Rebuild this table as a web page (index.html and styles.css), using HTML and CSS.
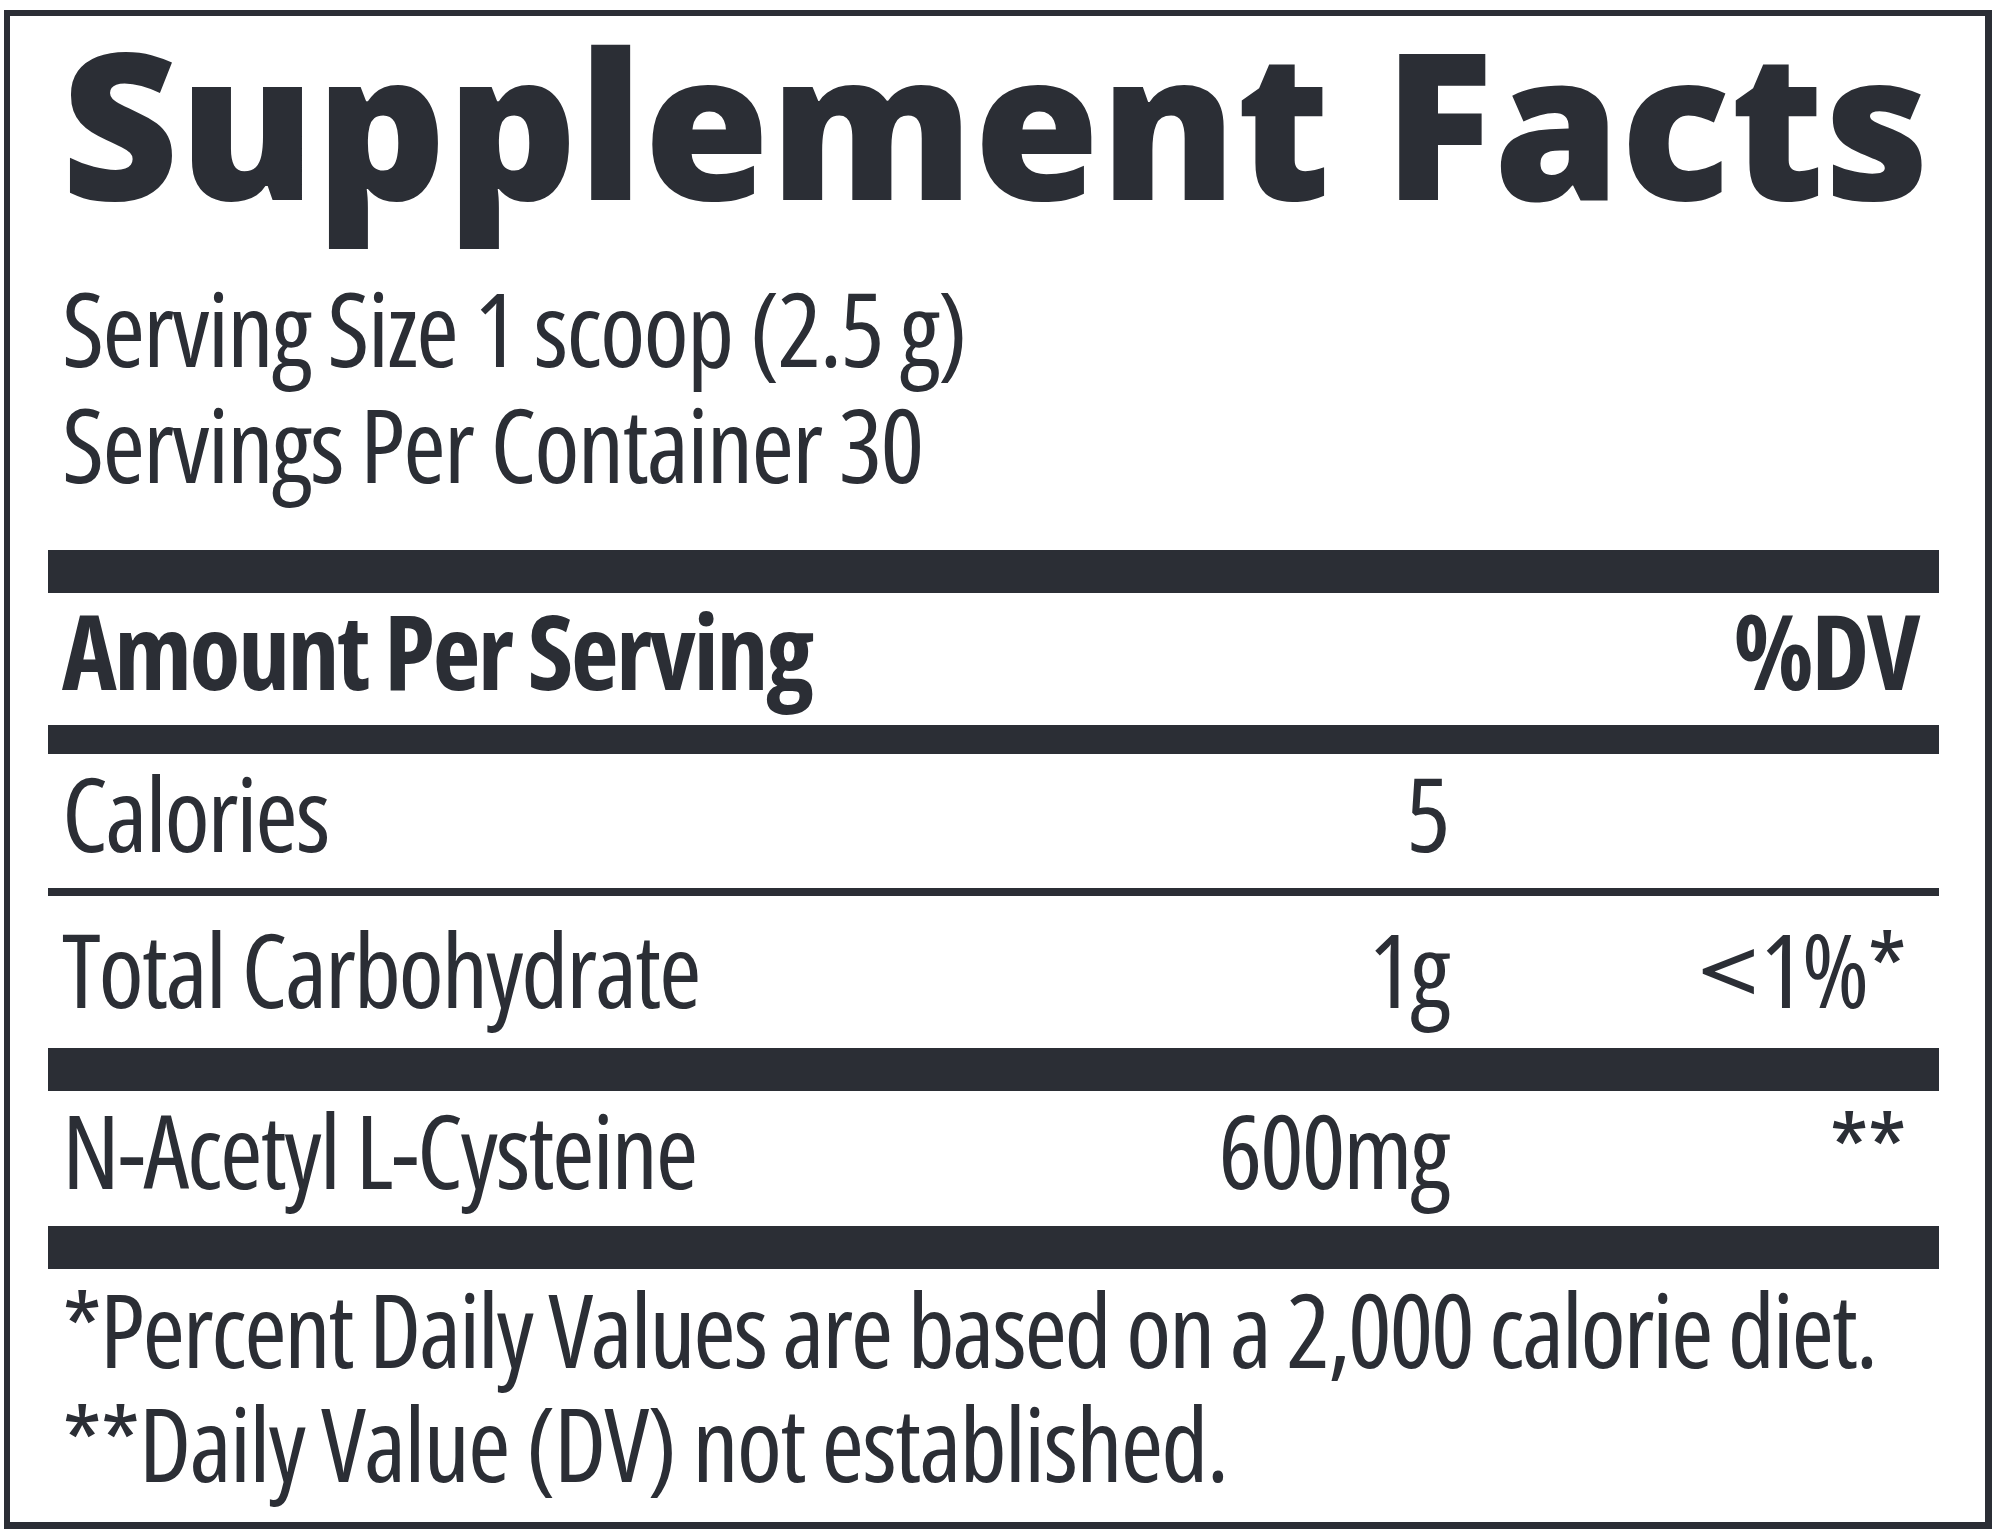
FILE: index.html
```html
<!DOCTYPE html>
<html lang="en">
<head>
    <meta charset="UTF-8">
    <meta name="viewport" content="width=device-width, initial-scale=1.0">
    <title>Supplement Facts</title>
    <link rel="stylesheet" href="styles.css">
</head>
<body>
    <div class="label">
        <h1 class="title">Supplement Facts</h1>

        <!-- Serving info -->
        <div class="serving">
            <p>Serving Size 1 scoop (2.5 g)</p>
            <p>Servings Per Container 30</p>
        </div>

        <div class="rule rule-thick"></div>
        <div class="row head">
            <span class="name">Amount Per Serving</span>
            <span class="dv">%DV</span>
        </div>
        <div class="rule rule-mid"></div>

        <div class="row row-calories">
            <span class="name">Calories</span>
            <span class="amount">5</span>
            <span class="dv"></span>
        </div>
        <div class="rule rule-thin"></div>
        <div class="row row-carb">
            <span class="name">Total Carbohydrate</span>
            <span class="amount">1g</span>
            <span class="dv"><span class="lt">&lt;</span>1%*</span>
        </div>
        <div class="rule rule-thick"></div>
        <div class="row row-nac">
            <span class="name">N-Acetyl L-Cysteine</span>
            <span class="amount">600mg</span>
            <span class="dv">**</span>
        </div>
        <div class="rule rule-thick"></div>

        <!-- Footnotes -->
        <div class="notes">
            <p class="note-long">*Percent Daily Values are based on a 2,000 calorie diet.</p>
            <p>**Daily Value (DV) not established.</p>
        </div>
    </div>
</body>
</html>
```
FILE: styles.css
```css
body {
    margin: 10px 8px 0 4px;
    background-color: #ffffff;
    color: #2b2e35;
    font-family: 'Open Sans', 'Noto Sans', sans-serif;
    font-stretch: 75%;
}
.label {
    border: 6px solid #2b2e35;
    border-right-width: 7px;
    border-bottom-width: 7px;
    padding: 0 46px 0 38px;
}
p {
    margin: 0;
}
.title {
    margin: 2px 0 0 0;
    padding-left: 13px;
    font-size: 204px;
    line-height: 206px;
    font-weight: 800;
    font-stretch: 100%;
    white-space: nowrap;
}
.serving {
    margin-top: 45px;
    padding-left: 14px;
    font-size: 103px;
    line-height: 116px;
    letter-spacing: -1.8px;
    white-space: nowrap;
}
.rule {
    background-color: #2b2e35;
}
.rule-thick {
    height: 43px;
}
.serving + .rule-thick {
    margin-top: 49px;
}
.rule-mid {
    height: 29px;
}
.rule-thin {
    height: 8px;
}
.row {
    display: flex;
    align-items: baseline;
    padding: 0 34px 0 14px;
    font-size: 103px;
    line-height: 116px;
    letter-spacing: -2.2px;
    white-space: nowrap;
}
.row .name {
    flex: 1;
}
.row .amount {
    text-align: right;
}
.row .dv {
    width: 457px;
    text-align: right;
}
.lt {
    display: inline-block;
    transform: scaleX(1.35);
    margin-right: 12px;
}
.head {
    padding: 0 21px 18px 14px;
    font-size: 104px;
    line-height: 114px;
    font-weight: 700;
    letter-spacing: -2.4px;
}
.head .dv {
    width: auto;
}
.row-calories {
    padding-bottom: 18px;
}
.row-carb {
    padding-top: 14px;
    padding-bottom: 22px;
}
.row-nac {
    padding-bottom: 19px;
}
.notes {
    padding: 2px 0 23px 14px;
    font-size: 103px;
    line-height: 114px;
    letter-spacing: -1.9px;
    white-space: nowrap;
}
.notes .note-long {
    letter-spacing: -2.4px;
}
```
